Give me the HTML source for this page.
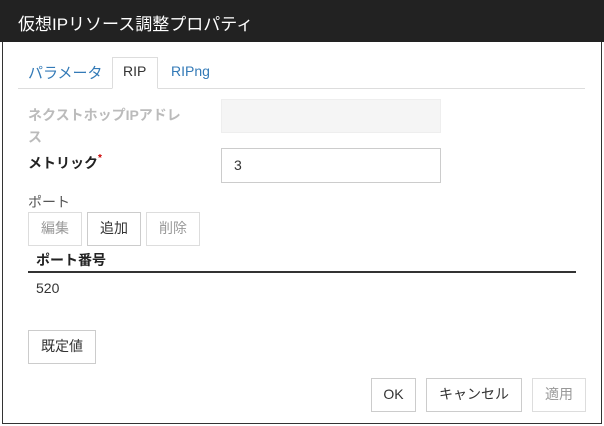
<!DOCTYPE html>
<html><head><meta charset="utf-8"><style>
*{box-sizing:border-box;margin:0;padding:0}
body{width:604px;height:426px;background:#fff;font-family:"Liberation Sans","Noto Sans CJK JP",sans-serif;font-size:14px;color:#333;position:relative;overflow:hidden}
.dlg{position:absolute;left:2px;top:0;width:600px;height:424px;border:1px solid #333;border-top:none}
.title{position:absolute;left:0;top:0;width:604px;height:42px;background:#222;color:#fff;font-size:17px;padding:10px 0 0 18px}
.a{position:absolute;white-space:nowrap}
.btn{position:absolute;border:1px solid #ccc;background:#fff;text-align:center;line-height:31px;font-size:14px;color:#333}
.dis{color:#999;border-color:#ddd}
.inp{position:absolute;border:1px solid #ccc;background:#fff;padding-left:12px;line-height:32px}
</style></head><body>
<div class="dlg"></div>
<div class="title">仮想IPリソース調整プロパティ</div>
<div class="a" style="left:18px;top:88px;width:567px;border-top:1px solid #ddd"></div>
<div class="a" style="left:28px;top:62px;color:#337ab7;font-size:15px">パラメータ</div>
<div class="a" style="left:112px;top:57px;width:46px;height:32px;border:1px solid #ddd;border-bottom:1px solid #fff;background:#fff"></div>
<div class="a" style="left:123px;top:63px;font-size:14px">RIP</div>
<div class="a" style="left:171px;top:63px;color:#337ab7;font-size:14px">RIPng</div>
<div class="a" style="left:28px;top:104px;color:#bbb;font-weight:bold;line-height:22px">ネクストホップIPアドレ<br>ス</div>
<div class="inp" style="left:221px;top:99px;width:220px;height:34px;background:#f5f5f5;border-color:#eee"></div>
<div class="a" style="left:28px;top:153px;font-weight:bold;color:#222">メトリック<span style="color:#c00;font-size:10px;vertical-align:top">*</span></div>
<div class="inp" style="left:221px;top:148px;width:220px;height:35px">3</div>
<div class="a" style="left:28px;top:192px;color:#555">ポート</div>
<div class="btn dis" style="left:28px;top:212px;width:54px;height:34px">編集</div>
<div class="btn" style="left:87px;top:212px;width:54px;height:34px">追加</div>
<div class="btn dis" style="left:146px;top:212px;width:54px;height:34px">削除</div>
<div class="a" style="left:36px;top:250px;font-weight:bold;color:#222">ポート番号</div>
<div class="a" style="left:28px;top:271px;width:548px;border-top:2px solid #333"></div>
<div class="a" style="left:36px;top:280px">520</div>
<div class="btn" style="left:28px;top:330px;width:68px;height:34px">既定値</div>
<div class="btn" style="left:371px;top:378px;width:45px;height:34px">OK</div>
<div class="btn" style="left:426px;top:378px;width:96px;height:34px">キャンセル</div>
<div class="btn dis" style="left:532px;top:378px;width:54px;height:34px">適用</div>
</body></html>
